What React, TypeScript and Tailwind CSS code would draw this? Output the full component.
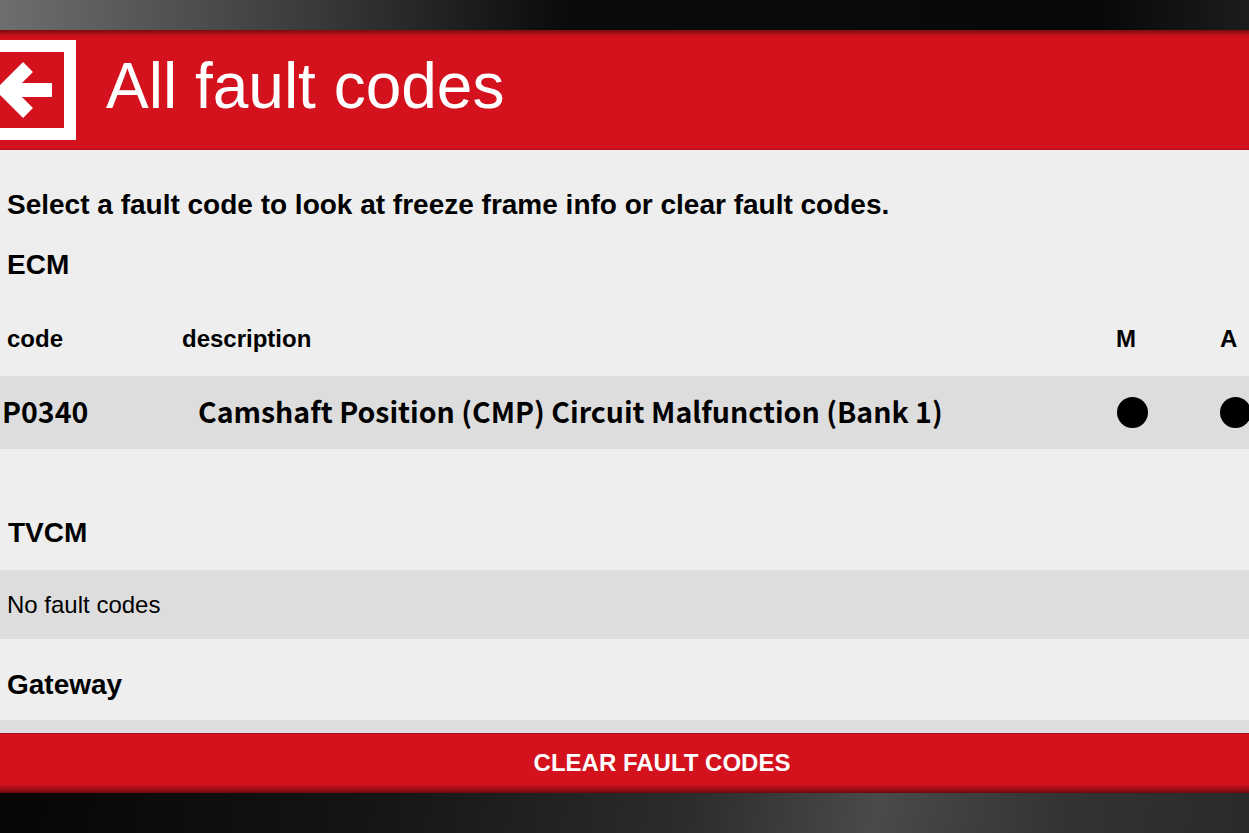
import React from "react";

const arial = "font-['Liberation_Sans',Arial,sans-serif]";
const malgun = "font-['Noto_Sans_CJK_KR','Noto_Sans',sans-serif]";

type Fault = { code: string; description: string; m: boolean; a: boolean };

const ecmFaults: Fault[] = [
  { code: "P0340", description: "Camshaft Position (CMP) Circuit Malfunction (Bank 1)", m: true, a: true },
];

function BackButton() {
  // white frame with arrow, partly scrolled off the left edge
  return (
    <svg width="76" height="100" viewBox="0 0 76 100" className="shrink-0">
      <rect x="-20" y="0" width="96" height="100" fill="#ffffff" />
      <rect x="-20" y="12" width="84" height="76" fill="#d3121d" />
      <rect x="10" y="43" width="42" height="14" fill="#ffffff" />
      <polyline points="28,27 5,50 28,73" fill="none" stroke="#ffffff" strokeWidth="14" />
    </svg>
  );
}

function Dot() {
  return <div className="w-[31px] h-[31px] rounded-full bg-black" />;
}

function SectionTitle({ children, className = "" }: { children: React.ReactNode; className?: string }) {
  return (
    <div className={`flex items-center pl-[7px] font-bold text-[28px] text-black ${className}`}>
      {children}
    </div>
  );
}

export default function App() {
  return (
    <div className={`w-[1249px] h-[833px] overflow-hidden flex flex-col ${arial}`}>
      {/* top chrome */}
      <div className="h-[30px] shrink-0 bg-[linear-gradient(90deg,#6e6e6e_0%,#3a3a3a_25%,#0b0b0b_45%,#080808_88%,#1c1c1c_100%)]" />

      {/* header */}
      <div className="h-[120px] shrink-0 flex items-center bg-[linear-gradient(to_bottom,#7a0b11_0px,#c01019_5px,#d3121d_9px,#d3121d_117px,#b30f18_120px)]">
        <BackButton />
        <h1 className="ml-[30px] text-white text-[64px] leading-none pb-[8px]">All fault codes</h1>
      </div>

      {/* content */}
      <div className="flex-1 bg-[#eeeeee] overflow-hidden pt-[30px] text-black">
        <div className="h-[50px] flex items-center pl-[7px] font-bold text-[28px]">
          Select a fault code to look at freeze frame info or clear fault codes.
        </div>

        <SectionTitle className="mt-[10px] h-[50px]">ECM</SectionTitle>

        <div className="mt-[24px] h-[50px] flex items-center font-bold text-[24px]">
          <div className="w-[182px] pl-[7px]">code</div>
          <div className="flex-1">description</div>
          <div className="w-[104px]">M</div>
          <div className="w-[29px]">A</div>
        </div>

        {ecmFaults.map((f) => (
          <div key={f.code} className="mt-[12px] h-[73px] flex items-center bg-[#dddddd]">
            <div className={`w-[198px] pl-[2px] pb-[3px] font-bold text-[28.5px] ${malgun}`}>{f.code}</div>
            <div className={`flex-1 pb-[3px] font-bold text-[28.5px] ${malgun}`}>{f.description}</div>
            <div className="w-[103px]">{f.m && <Dot />}</div>
            <div className="w-[29px]">{f.a && <Dot />}</div>
          </div>
        ))}

        <SectionTitle className="mt-[59px] h-[50px] pl-[8px]">TVCM</SectionTitle>
        <div className="mt-[12px] h-[69px] flex items-center pl-[7px] bg-[#dddddd] text-[24px]">
          No fault codes
        </div>

        <SectionTitle className="h-[81px] pt-[10px]">Gateway</SectionTitle>
        <div className="h-[69px] bg-[#dddddd]" />
      </div>

      {/* clear button */}
      <button className="h-[60px] shrink-0 flex items-center justify-center pl-[75px] pb-[2px] text-white font-bold text-[24px] border-t border-[#a80e16] bg-[linear-gradient(to_bottom,#d3121d_0px,#d3121d_50px,#a30e16_55px,#6a0a0e_59px)]">
        CLEAR FAULT CODES
      </button>

      {/* bottom chrome */}
      <div className="h-[40px] shrink-0 bg-[linear-gradient(100deg,#050505_0%,#151515_30%,#2c2c2c_55%,#4a4a4a_70%,#333333_85%,#2a2a2a_100%)]" />
    </div>
  );
}
